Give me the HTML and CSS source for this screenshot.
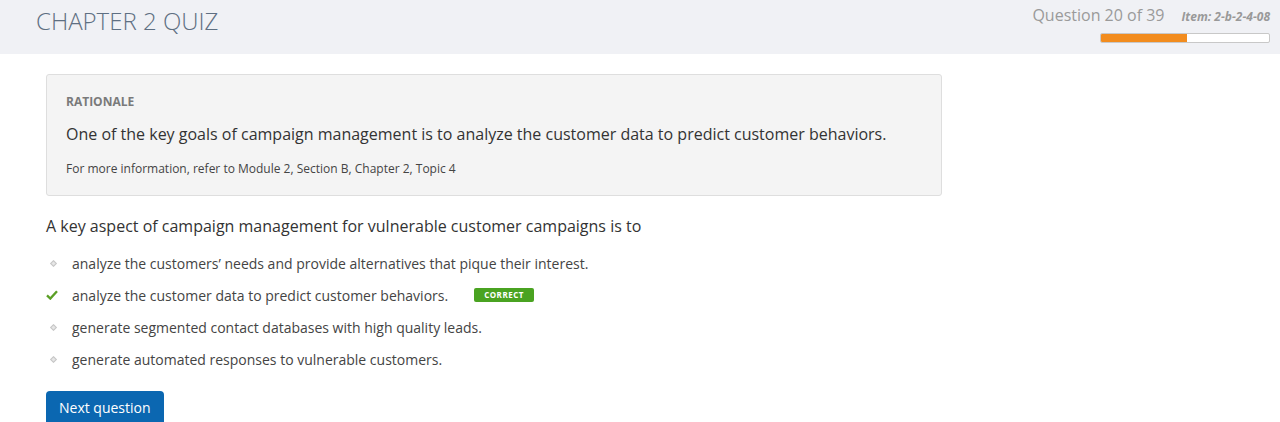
FILE: index.html
```html
<!DOCTYPE html>
<html>
<head>
<meta charset="utf-8">
<link rel="stylesheet" href="styles.css">
</head>
<body>
<header class="top">
  <h1 class="title">CHAPTER 2 QUIZ</h1>
  <div class="status">
    <div class="status-line">
      <span class="counter">Question 20 of 39</span>
      <span class="item">Item: 2-b-2-4-08</span>
    </div>
    <div class="progress"><div class="progress-fill" style="width:51.3%"></div></div>
  </div>
</header>
<main class="content">
  <section class="rationale">
    <div class="rationale-label">RATIONALE</div>
    <p class="rationale-text">One of the key goals of campaign management is to analyze the customer data to predict customer behaviors.</p>
    <p class="rationale-ref">For more information, refer to Module 2, Section B, Chapter 2, Topic 4</p>
  </section>
  <p class="question">A key aspect of campaign management for vulnerable customer campaigns is to</p>
  <ul class="options">
    <li class="option"><span class="marker"><span class="dot"></span></span><span>analyze the customers’ needs and provide alternatives that pique their interest.</span></li>
    <li class="option"><span class="marker"><svg class="check" width="12" height="10" viewBox="0 0 12 10"><path d="M1 5.4 L4.3 8.6 L11 1.2" fill="none" stroke="#5b9f25" stroke-width="2.3"/></svg></span><span>analyze the customer data to predict customer behaviors.</span><span class="badge">CORRECT</span></li>
    <li class="option"><span class="marker"><span class="dot"></span></span><span>generate segmented contact databases with high quality leads.</span></li>
    <li class="option"><span class="marker"><span class="dot"></span></span><span>generate automated responses to vulnerable customers.</span></li>
  </ul>
  <button class="next">Next question</button>
</main>
</body>
</html>
```
FILE: styles.css
```css
html, body {
  margin: 0;
  padding: 0;
}
body {
  font-family: "Open Sans", "Noto Sans", sans-serif;
  background: #fff;
  color: #333;
  overflow: hidden;
  height: 422px;
}
.top {
  height: 54px;
  background: #f0f1f5;
  display: flex;
  justify-content: space-between;
  align-items: flex-start;
  padding: 0 10px 0 36px;
}
.title {
  margin: 0;
  padding-top: 5px;
  font-size: 24px;
  font-weight: 300;
  color: #5e6f82;
  line-height: 32px;
}
.status {
  display: flex;
  flex-direction: column;
  align-items: flex-end;
  padding-top: 3px;
}
.status-line {
  display: flex;
  align-items: baseline;
  gap: 17px;
  line-height: 24px;
}
.counter {
  font-size: 16px;
  color: #9a9a9a;
}
.item {
  font-size: 12px;
  font-style: italic;
  font-weight: 700;
  color: #999;
}
.progress {
  margin-top: 4px;
  width: 168px;
  height: 8px;
  border: 1px solid #c8c8c8;
  border-radius: 2px;
  background: #fff;
  overflow: hidden;
}
.progress-fill {
  height: 100%;
  background: #f28c1e;
}
.content {
  padding: 20px 0 0 46px;
}
.rationale {
  width: 856px;
  background: #f4f4f4;
  border: 1px solid #dedede;
  border-radius: 3px;
  padding: 18px 19px 17px 19px;
}
.rationale-label {
  font-size: 12px;
  font-weight: 700;
  color: #7a7a7a;
  line-height: 18px;
}
.rationale-text {
  margin: 12px 0 0;
  font-size: 16px;
  color: #333;
  line-height: 22px;
}
.rationale-ref {
  margin: 15px 0 0;
  font-size: 12px;
  color: #444;
  line-height: 18px;
}
.question {
  margin: 19px 0 0;
  font-size: 16px;
  line-height: 22px;
  color: #333;
}
.options {
  list-style: none;
  margin: 10px 0 0;
  padding: 0;
}
.option {
  display: flex;
  align-items: center;
  height: 32px;
  font-size: 14px;
  color: #444;
}
.marker {
  width: 26px;
  display: flex;
  align-items: center;
  justify-content: flex-start;
}
.dot {
  display: block;
  width: 3px;
  height: 3px;
  margin-left: 5px;
  border: 1px solid #c6c6c6;
  background: #e6e6e6;
  transform: rotate(45deg);
}
.check {
  display: block;
}
.badge {
  margin-left: 26px;
  background: #4aa321;
  color: #fff;
  font-size: 8px;
  font-weight: 700;
  letter-spacing: 0.5px;
  line-height: 14px;
  padding: 0 10px;
  border-radius: 2px;
}
.next {
  margin-top: 16px;
  font-family: inherit;
  background: #0b67b1;
  color: #fff;
  border: none;
  border-radius: 4px 4px 0 0;
  font-size: 14px;
  height: 34px;
  padding: 0 13px;
  line-height: 34px;
  cursor: pointer;
}
```
